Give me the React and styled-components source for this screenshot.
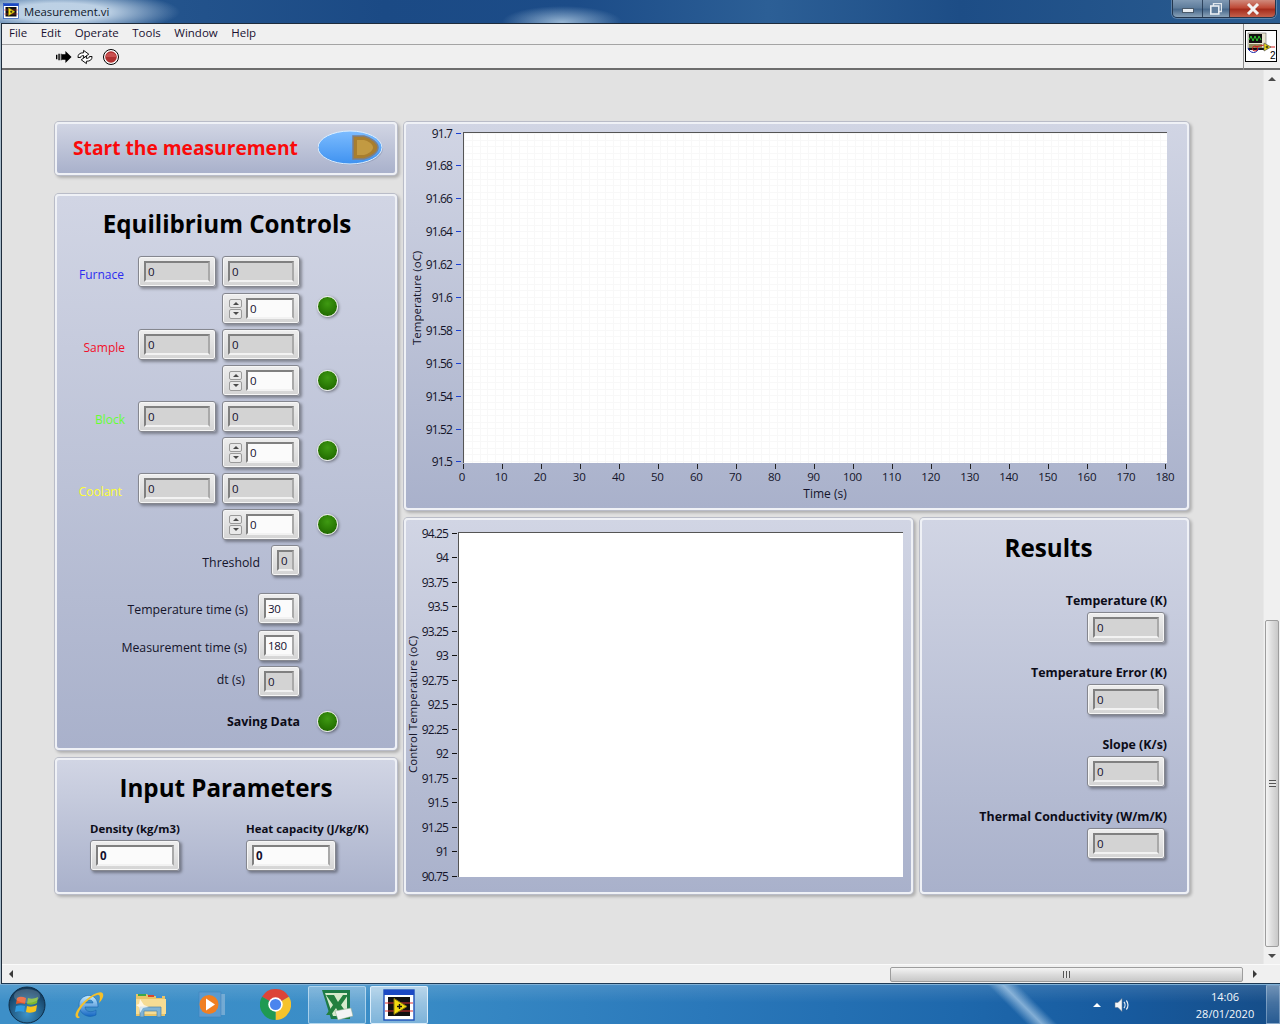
import styled, {createGlobalStyle} from 'styled-components';

const uiFont = `"Open Sans", "Noto Sans", "Liberation Sans", sans-serif`;

const GlobalStyle = createGlobalStyle`
  html, body {
    margin: 0;
    padding: 0;
    overflow: hidden;
    background: #a8bccb;
  }
  * { box-sizing: border-box; }
`;

const Screen = styled.div`
  width: 1280px;
  height: 1024px;
  display: flex;
  flex-direction: column;
  font-family: ${uiFont};
  font-size: 12px;
  color: #14142a;
  overflow: hidden;
  background: #a8bccb;
`;

/* ---------- window chrome ---------- */
const TitleBar = styled.div`
  height: 23px;
  flex: none;
  display: flex;
  align-items: flex-start;
  padding-left: 3px;
  background:
    radial-gradient(ellipse 60px 16px at 562px 22px, rgba(190, 215, 235, .75), transparent),
    radial-gradient(ellipse 120px 22px at 60px 12px, rgba(205, 222, 238, .9) 40%, transparent),
    linear-gradient(90deg, #2a5b92 0, #1b4a85 30%, #1c4c88 45%, #2c5f96 60%, #1d4d86 75%, #2a5c90 100%);
`;

const TitleIcon = styled.div`
  width: 16px;
  height: 16px;
  margin-top: 3px;
`;

const TitleText = styled.span`
  margin: 3px 0 0 5px;
  font-size: 11.3px;
  line-height: 17px;
  color: #10182a;
`;

const Caption = styled.div`
  margin-left: auto;
  margin-right: 4px;
  display: flex;
  height: 18px;
  border: 1px solid #23364e;
  border-top: none;
  border-radius: 0 0 5px 5px;
  overflow: hidden;
  box-shadow: 0 0 0 1px rgba(255, 255, 255, .25);
`;

const CaptionButton = styled.div`
  width: ${p => p.$w}px;
  display: flex;
  align-items: center;
  justify-content: center;
  border-left: ${p => p.$first ? 'none' : '1px solid rgba(30, 50, 75, .8)'};
  background: ${p => p.$close
    ? 'linear-gradient(#d08a7c, #bf4a37 45%, #a52c1c 55%, #c4614c)'
    : 'linear-gradient(#7f99b4, #5f7d9c 45%, #48698c 55%, #8aa2b8)'};
`;

const MinGlyph = styled.div`
  width: 12px;
  height: 5px;
  margin-top: 4px;
  background: #e8edf2;
  border: 1px solid #4a5a6a;
`;

const Window = styled.div`
  flex: 1;
  min-height: 0;
  margin: 0 0 0 1px;
  display: flex;
  flex-direction: column;
  border-top: 1px solid #1e2c3c;
  border-left: 1px solid #1e2c3c;
  border-bottom: 1px solid #1e3a55;
  background: #f0f0f0;
`;

const Header = styled.div`
  height: 46px;
  flex: none;
  display: flex;
  border-bottom: 2px solid #6d6d6d;
`;

const HeaderBars = styled.div`
  flex: 1;
  display: flex;
  flex-direction: column;
`;

const MenuBar = styled.div`
  height: 21px;
  display: flex;
  align-items: center;
  gap: 13.5px;
  padding: 0 0 4px 7px;
  border-bottom: 1px solid #a4a4a4;
`;

const MenuItem = styled.span`
  font-size: 11.5px;
  color: #1a1030;
`;

const ToolBar = styled.div`
  flex: 1;
  display: flex;
  align-items: center;
  padding: 0 0 0 54px;
  gap: 5px;
`;

const StopSlot = styled.div`
  margin-left: 5px;
  display: flex;
`;

const IconPane = styled.div`
  width: 37px;
  flex: none;
  border-left: 1px solid #8c8c8c;
  padding: 6px 0 0 1px;
  height: 46px;
`;

const Workspace = styled.div`
  flex: 1;
  min-height: 0;
  display: flex;
`;

const Canvas = styled.div`
  flex: 1;
  background: #e2e2e2;
  padding: 52px 0 0 53px;
  display: flex;
  gap: 7px;
`;

const VScroll = styled.div`
  width: 17px;
  flex: none;
  display: flex;
  flex-direction: column;
  align-items: center;
  background: #f0f0f0;
  border-left: 1px solid #e8e8e8;
`;

const ArrowBox = styled.div`
  height: 18px;
  width: 17px;
  flex: none;
  display: flex;
  align-items: center;
  justify-content: center;
`;

const Tri = styled.div`
  width: 0;
  height: 0;
  ${p => p.$dir === 'up' && 'border-left: 4px solid transparent; border-right: 4px solid transparent; border-bottom: 4px solid #4a4a4a;'}
  ${p => p.$dir === 'down' && 'border-left: 4px solid transparent; border-right: 4px solid transparent; border-top: 4px solid #4a4a4a;'}
  ${p => p.$dir === 'left' && 'border-top: 4px solid transparent; border-bottom: 4px solid transparent; border-right: 4px solid #3a3a3a;'}
  ${p => p.$dir === 'right' && 'border-top: 4px solid transparent; border-bottom: 4px solid transparent; border-left: 4px solid #3a3a3a;'}
`;

const VTrack = styled.div`
  flex: 1;
  width: 100%;
  padding: 532px 1px 0 1px;
  display: flex;
`;

const VThumb = styled.div`
  flex: 1;
  height: 327px;
  border: 1px solid #9d9d9d;
  border-radius: 2px;
  background: linear-gradient(90deg, #f4f4f4, #dcdcdc 50%, #c8c8c8);
  display: flex;
  align-items: center;
  justify-content: center;
`;

const VGrip = styled.div`
  width: 7px;
  height: 7px;
  background: repeating-linear-gradient(180deg, #555 0 1px, #e4e4e4 1px 3px);
`;

const HScroll = styled.div`
  height: 19px;
  flex: none;
  display: flex;
  align-items: center;
  border-top: 1px solid #fafafa;
  background: #f0f0f0;
`;

const HTrack = styled.div`
  flex: 1;
  padding-left: 871px;
  padding-right: 3px;
`;

const HThumb = styled.div`
  height: 15px;
  border: 1px solid #9d9d9d;
  border-radius: 2px;
  background: linear-gradient(#f4f4f4, #dcdcdc 50%, #c8c8c8);
  display: flex;
  align-items: center;
  justify-content: center;
`;

const HGrip = styled.div`
  width: 7px;
  height: 7px;
  background: repeating-linear-gradient(90deg, #555 0 1px, #e4e4e4 1px 3px);
`;

/* ---------- front panel ---------- */
const LeftColumn = styled.div`
  width: 342px;
  flex: none;
  display: flex;
  flex-direction: column;
`;

const RightColumn = styled.div`
  width: 785px;
  flex: none;
  display: flex;
  flex-direction: column;
  gap: 8px;
`;

const BottomRow = styled.div`
  display: flex;
  gap: 7px;
`;

const Panel = styled.section`
  width: ${p => p.$w ? `${p.$w}px` : '100%'};
  height: ${p => p.$h}px;
  margin-top: ${p => p.$top || 0}px;
  flex: none;
  border: 2px solid #eff1f6;
  border-radius: 4px;
  background: linear-gradient(#d1d5e4, #a9b1cb);
  box-shadow: 0 0 0 1px #b9bcc8, 2px 2px 3px 1px rgba(0, 0, 0, .22);
`;

const StartPanel = styled(Panel)`
  display: flex;
  align-items: center;
  padding: 0 11px 2px 16px;
  justify-content: space-between;

  svg {
    flex: none;
  }
`;

const StartText = styled.span`
  font-size: 19.2px;
  font-weight: 700;
  white-space: nowrap;
  color: #fa0a0a;
`;

const BigTitle = styled.h2`
  margin: 0;
  padding: 12px ${p => p.$right || 0}px 0 ${p => p.$left || 0}px;
  font-size: 24.2px;
  line-height: 32px;
  font-weight: 700;
  text-align: center;
  color: #000;
`;

const Rows = styled.div`
  display: flex;
  flex-direction: column;
  padding-top: 16px;
`;

const Row = styled.div`
  display: flex;
  justify-content: flex-end;
  align-items: center;
  margin-top: ${p => p.$top || 0}px;
`;

const LedSlot = styled.div`
  width: 95px;
  flex: none;
  padding-left: 17px;
  display: flex;
  align-items: center;
`;

const Led = styled.div`
  width: 21px;
  height: 21px;
  margin-bottom: ${p => p.$lift || 0}px;
  border-radius: 50%;
  border: 1.5px solid #f3f5ee;
  background: radial-gradient(circle at 50% 35%, #3f9a12, #2a7a05 55%, #1c5c00);
  box-shadow: 1px 1px 3px rgba(0, 0, 0, .45);
`;

const ChannelLabel = styled.span`
  font-size: 12px;
  margin: 5px ${p => p.$gap}px 0 0;
  color: ${p => p.$color};
`;

const FieldLabel = styled.span`
  font-size: 12.3px;
  margin: ${p => p.$drop || 0}px ${p => p.$gap}px 0 0;
  color: #14142a;
`;

const BoldLabel = styled.span`
  font-size: ${p => p.$size || 12.4}px;
  font-weight: 700;
  white-space: nowrap;
  color: #0c0c18;
`;

const Frame = styled.div`
  width: ${p => p.$w}px;
  height: 31px;
  margin-left: ${p => p.$left || 0}px;
  flex: none;
  display: flex;
  align-items: center;
  gap: 4px;
  padding: 0 5px;
  border: 1px solid #85878f;
  border-radius: 3px;
  background: linear-gradient(#eeeeee, #d4d4d4);
  box-shadow: inset 0 0 0 1px #f6f6f6, 2px 2px 3px rgba(0, 0, 0, .35);
`;

const Well = styled.div`
  flex: 1;
  min-width: 0;
  height: 21px;
  padding-left: 2px;
  display: flex;
  align-items: center;
  font-size: 11.5px;
  letter-spacing: -.3px;
  font-weight: ${p => p.$bold ? 700 : 400};
  color: #14102e;
  background: ${p => p.$input ? '#fbfbfb' : '#d3d3d3'};
  border: 2px solid #808080;
  border-right-color: #a9a9a9;
  border-bottom-color: #f2f2f2;
`;

const Spin = styled.div`
  width: 13px;
  height: 20px;
  margin-left: 1px;
  flex: none;
  display: flex;
  flex-direction: column;
  gap: 1px;
`;

const SpinButton = styled.div`
  flex: 1;
  display: flex;
  align-items: center;
  justify-content: center;
  border: 1px solid #9a9a9a;
  border-radius: 2px;
  background: #e9e9e9;
`;

const SmallTri = styled(Tri)`
  border-width: 3px;
`;

const InputRow = styled.div`
  display: flex;
  padding: 17px 0 0 33px;
  gap: 66px;
`;

const InputGroup = styled.div`
  display: flex;
  flex-direction: column;
  gap: 4px;
`;

const ResultsList = styled.div`
  display: flex;
  flex-direction: column;
  align-items: flex-end;
  padding: 28px 20px 0 0;
  gap: 21px;
`;

const ResultItem = styled.div`
  display: flex;
  flex-direction: column;
  align-items: flex-end;
  gap: 3px;
`;

const ResultFrame = styled(Frame)`
  margin-right: 2px;
`;

/* ---------- charts ---------- */
const ChartGrid = styled.div`
  display: grid;
  grid-template-columns: ${p => p.$titleW}px ${p => p.$axisW}px ${p => p.$plotW}px;
  grid-template-rows: ${p => p.$plotH}px auto;
  padding-top: ${p => p.$top}px;
`;

const YTitle = styled.div`
  writing-mode: vertical-rl;
  transform: rotate(180deg);
  text-align: center;
  font-size: 11.5px;
  line-height: 14px;
  white-space: nowrap;
  display: flex;
  align-items: center;
  justify-content: center;
`;

const YAxis = styled.div`
  display: flex;
  flex-direction: column;
  justify-content: space-between;
  padding: ${p => p.$pad};
`;

const YTick = styled.div`
  height: 0;
  display: flex;
  align-items: center;
  justify-content: flex-end;
  font-size: 12px;
  letter-spacing: -.85px;
  white-space: nowrap;
`;

const YMark = styled.i`
  width: 5px;
  height: 1px;
  margin: 0 ${p => p.$end}px 0 4px;
  background: ${p => p.$color};
  flex: none;
`;

const Plot = styled.div`
  background-color: #fff;
  border-top: 1px solid #555;
  border-left: 1px solid #555;
  ${p => p.$grid && `
    background-image:
      repeating-linear-gradient(90deg, #f8f8f8 0 1px, transparent 1px 7.82px),
      repeating-linear-gradient(180deg, #f8f8f8 0 1px, transparent 1px 6.56px);
    background-position: 0 0;
  `}
`;

const XAxis = styled.div`
  grid-column: 3;
  display: flex;
  justify-content: space-between;
  padding-right: 1px;
`;

const XTick = styled.div`
  width: 0;
  display: flex;
  flex-direction: column;
  align-items: center;
  font-size: 11.5px;
  letter-spacing: -.3px;
  line-height: 16px;
`;

const XMark = styled.i`
  width: 1px;
  height: 5px;
  flex: none;
  margin-top: 1px;
  background: #222;
`;

const XLabel = styled.span`
  margin-right: 2px;
`;

const XTitle = styled.div`
  grid-column: 3;
  text-align: center;
  padding-left: 20px;
  font-size: 12px;
  line-height: 16px;
  margin-top: 1px;
`;

/* ---------- taskbar ---------- */
const Taskbar = styled.footer`
  height: 40px;
  flex: none;
  position: relative;
  display: flex;
  align-items: center;
  overflow: hidden;
  border-top: 1px solid #7fb0d6;
  background:
    linear-gradient(rgba(255, 255, 255, .12), rgba(255, 255, 255, 0) 45%),
    linear-gradient(90deg, #3d8fc8 0, #3a8dc7 30%, #2a78ba 55%, #1e68ac 75%, #175a9e 88%, #164d88 100%);
`;

const Streak = styled.div`
  position: absolute;
  left: 1012px;
  top: -20px;
  width: 22px;
  height: 80px;
  transform: rotate(-45deg);
  background: linear-gradient(90deg, transparent, rgba(200, 225, 245, .6), transparent);
`;

const TaskSlot = styled.div`
  width: ${p => p.$w || 62}px;
  height: 38px;
  flex: none;
  display: flex;
  align-items: center;
  justify-content: center;
  padding-right: ${p => p.$right || 0}px;
  position: relative;
  z-index: 1;
`;

const TaskButton = styled.div`
  width: 58px;
  height: 38px;
  display: flex;
  align-items: center;
  justify-content: center;
  border: 1px solid rgba(230, 245, 255, ${p => p.$active ? .85 : .55});
  border-radius: 2px;
  background: linear-gradient(rgba(255, 255, 255, ${p => p.$active ? .6 : .3}), rgba(255, 255, 255, ${p => p.$active ? .35 : .12}));
`;

const Tray = styled.div`
  margin-left: auto;
  display: flex;
  align-items: center;
  height: 38px;
  position: relative;
  z-index: 1;
`;

const TrayArrow = styled(Tri)`
  margin-right: 13px;
  border-left-color: transparent;
  border-bottom-color: #fff;
`;

const Clock = styled.div`
  width: 100px;
  margin-left: 34px;
  display: flex;
  flex-direction: column;
  align-items: center;
  padding-left: 22px;
  font-size: 11px;
  line-height: 17px;
  color: #f4f8fc;
`;

const ShowDesktop = styled.div`
  width: 14px;
  height: 39px;
  margin-left: 2px;
  border: 1px solid rgba(200, 220, 240, .4);
  background: linear-gradient(rgba(255, 255, 255, .3), rgba(255, 255, 255, .08));
`;

/* ---------- drawings ---------- */
const LvIcon = ({size}) => (
    <svg width={size} height={size} viewBox="0 0 32 32">
        <rect x="1" y="1" width="30" height="30" fill="#fff" stroke="#1c4fb8" strokeWidth="1.4"/>
        <rect x="1" y="1" width="30" height="5" fill="#1b49c4"/>
        <rect x="5" y="8" width="22" height="19" fill="#111"/>
        <path d="M2 14h28M2 22h28" stroke="#d33" strokeWidth="1"/>
        <path d="M11 9.5 L24 17.5 L11 25.5 Z" fill="#f4dc10" stroke="#8a7a10" strokeWidth="1"/>
        <path d="M14 17.5h5M16.5 15v5" stroke="#111" strokeWidth="1.4"/>
    </svg>
);

const RunIcon = () => (
    <svg width="16" height="14" viewBox="0 0 17 14">
        <path d="M6 4H10V0.5L16.5 7L10 13.5V10H6Z" fill="#000"/>
        <path d="M0 4.5H1.5V9.5H0ZM2.5 3.5H4V10.5H2.5ZM5 3.5H6V10.5H5Z" fill="#000"/>
    </svg>
);

const LoopIcon = () => (
    <svg width="16" height="16" viewBox="0 0 17 16" fill="#fff" stroke="#000" strokeWidth="1">
        <path d="M1 8.5 C1 5 3 3.5 7 3.5 V1 L12.5 5 L7 9 V6.5 C5 6.5 4 7 3.8 8.5 Z"/>
        <path d="M16 7.5 C16 11 14 12.5 10 12.5 V15 L4.5 11 L10 7 V9.5 C12 9.5 13 9 13.2 7.5 Z"/>
    </svg>
);

const StopIcon = () => (
    <svg width="16" height="16" viewBox="0 0 16 16">
        <circle cx="8" cy="8" r="7.5" fill="#fff" stroke="#000"/>
        <circle cx="8" cy="8" r="5.8" fill="#b03030"/>
        <path d="M2.4 8a5.8 5.8 0 0 1 11.2 0Z" fill="#c95050"/>
    </svg>
);

const RestoreGlyph = () => (
    <svg width="12" height="12" viewBox="0 0 12 12" fill="none">
        <rect x="3.5" y="0.5" width="8" height="8" stroke="#dfe6ec" strokeWidth="1.4"/>
        <rect x="0.8" y="3" width="8" height="8" fill="#5f7d9c" stroke="#e8edf2" strokeWidth="1.6"/>
    </svg>
);

const ViIcon = () => (
    <svg width="32" height="32" viewBox="0 0 32 32">
        <rect x="0.5" y="0.5" width="31" height="31" fill="#fff" stroke="#000"/>
        <rect x="3" y="3" width="18" height="15" fill="#e8e4d0" stroke="#555" strokeWidth=".5"/>
        <rect x="4" y="4" width="13" height="9" fill="#111"/>
        <path d="M4 10 L6 6 L8 11 L10 6 L12 11 L14 6 L16 10" fill="none" stroke="#2ecc2e" strokeWidth="1"/>
        <rect x="4" y="14" width="13" height="4" fill="#8e8a5a"/>
        <rect x="3" y="18" width="18" height="2" fill="#111"/>
        <path d="M3 18 C5 24 12 24 14 18" fill="none" stroke="#1a2ab0" strokeWidth="1"/>
        <circle cx="10" cy="18.5" r="2.5" fill="none" stroke="#d02020"/>
        <path d="M10 17 L19 15 M25 17 H30" stroke="#d02020" strokeWidth="1" fill="none"/>
        <path d="M19 13 L26 17 L19 21 Z" fill="#f4e010" stroke="#555" strokeWidth=".7"/>
        <path d="M20.5 17h3M22 15.5v3" stroke="#000" strokeWidth=".8"/>
        <text x="25" y="29" fontSize="10" fontFamily="Liberation Sans, sans-serif" fill="#000">2</text>
    </svg>
);

const RunButton = () => (
    <svg width="66" height="36" viewBox="0 0 66 36">
        <defs>
            <linearGradient id="runBlue" x1="0" y1="0" x2="0" y2="1">
                <stop offset="0" stopColor="#7cbcff"/>
                <stop offset="1" stopColor="#3f92f0"/>
            </linearGradient>
        </defs>
        <ellipse cx="33" cy="18.5" rx="32" ry="16.5" fill="#7f89a8" opacity=".5"/>
        <ellipse cx="32" cy="17.5" rx="32" ry="16.5" fill="url(#runBlue)" stroke="#dff0ff" strokeWidth="1"/>
        <path d="M35 6 H46 C54 8 60 13 60 17.5 C60 22 54 27 46 29 H35 Z" fill="#a87e2e" stroke="#7d7f86" strokeWidth="1.5"/>
        <path d="M39 10 H46 C50 11 55 14 55 17.5 C55 21 50 24 46 25 H39 Z" fill="#c29a42"/>
    </svg>
);

const WinOrb = () => (
    <svg width="38" height="38" viewBox="0 0 38 38">
        <defs>
            <radialGradient id="orb" cx="50%" cy="75%" r="70%">
                <stop offset="0" stopColor="#3d93c9"/>
                <stop offset="1" stopColor="#123a5c"/>
            </radialGradient>
        </defs>
        <circle cx="19" cy="19" r="18" fill="url(#orb)" stroke="#0e2c46"/>
        <path d="M9 12 C12 10 15 11 18 12 L17 18 C14 17 11 17 8 18 Z" fill="#e8572a"/>
        <path d="M20 12 C23 13 26 13 30 11 L29 17 C26 19 22 19 19 18 Z" fill="#7cb82f"/>
        <path d="M8 20 C11 19 14 19 17 20 L16 26 C13 25 10 25 7 26 Z" fill="#2f9ae0"/>
        <path d="M19 20 C22 21 25 21 29 19 L28 25 C25 27 21 27 18 26 Z" fill="#f7c31c"/>
        <ellipse cx="19" cy="10" rx="13" ry="7" fill="#fff" opacity=".18"/>
    </svg>
);

const IeIcon = () => (
    <svg width="32" height="32" viewBox="0 0 32 32">
        <defs>
            <linearGradient id="ieBlue" x1="0" y1="0" x2="0" y2="1">
                <stop offset="0" stopColor="#c4ecff"/>
                <stop offset="1" stopColor="#1668c4"/>
            </linearGradient>
        </defs>
        <path d="M6 16 C6 9 13 5 19 7 C24 9 25 14 25 18 H12 C12 23 19 24 23 21 V26 C15 30 6 25 6 16 Z M12 14 H20 C20 10 13 10 12 14 Z" fill="url(#ieBlue)" fillRule="evenodd" stroke="#0f5aa8" strokeWidth=".5"/>
        <path d="M3 28 C0 24 12 8 24 4 C29 2 31 4 30 8 C29 11 27 13 26 14 C27 10 28 5 24 6 C16 8 6 20 5 26 C5 27 6 28 7 28 C5 30 4 29 3 28 Z" fill="#f5c02a"/>
    </svg>
);

const FolderIcon = () => (
    <svg width="32" height="28" viewBox="0 0 32 28">
        <path d="M1 3 H12 L14 5 H30 V25 H1 Z" fill="#e8c468"/>
        <rect x="3" y="3" width="8" height="2" fill="#3ba84a"/>
        <rect x="13" y="4" width="6" height="2" fill="#d8452e"/>
        <rect x="21" y="5" width="6" height="2" fill="#3b8fd8"/>
        <path d="M1 8 H31 V23 H1 Z" fill="#f6dc94"/>
        <path d="M5 26 V16 H26 V26 H22 V20 H9 V26 Z" fill="#7fb3d6" stroke="#4d84ab" strokeWidth=".7"/>
        <path d="M5 8 L9 14 L14 16 L8 17 L5 22 L4 16 L1 14 L4 13 Z" fill="#fff" opacity=".75"/>
    </svg>
);

const MediaIcon = () => (
    <svg width="30" height="28" viewBox="0 0 30 28">
        <rect x="7" y="3" width="20" height="21" fill="#8cb6d8" opacity=".7"/>
        <rect x="1" y="1" width="22" height="25" fill="#5b9bd0" stroke="#3f7fb6" strokeWidth=".5"/>
        <circle cx="11" cy="13.5" r="9.5" fill="#f07f22"/>
        <path d="M8 7.5 L17 13.5 L8 19.5 Z" fill="#fff"/>
    </svg>
);

const ChromeIcon = () => (
    <svg width="31" height="31" viewBox="0 0 30 30">
        <path d="M15 15 L2 7.5 A15 15 0 0 1 28 7.5 Z" fill="#dc4437"/>
        <path d="M15 15 L28 7.5 A15 15 0 0 1 15 30 Z" fill="#f6c32c"/>
        <path d="M15 15 L15 30 A15 15 0 0 1 2 7.5 Z" fill="#1f9a52"/>
        <circle cx="15" cy="15" r="7" fill="#fff"/>
        <circle cx="15" cy="15" r="5.4" fill="#4a85ee"/>
    </svg>
);

const ExcelIcon = () => (
    <svg width="32" height="32" viewBox="0 0 32 32">
        <path d="M1 1 H29 V30 H10 Z" fill="#1d7b45"/>
        <path d="M4 4 H26 V27 H12 Z" fill="#d6eacb"/>
        <path d="M5 6 H13 L17 13 L22 6 H27 L20 16 L27 26 H19 L15 19 L10 26 H5 L12 16 Z" fill="#23803f"/>
        <path d="M14 22 L30 19 L32 27 L17 31 Z" fill="#f4f4f4" stroke="#8aa88a" strokeWidth=".5"/>
    </svg>
);

const SpeakerIcon = () => (
    <svg width="16" height="16" viewBox="0 0 16 16">
        <path d="M1 5.5 H4 L8 1.5 V14.5 L4 10.5 H1 Z" fill="#f4f6f8" stroke="#6a7a8a" strokeWidth=".5"/>
        <path d="M10 5 C11.3 6.6 11.3 9.4 10 11 M12.3 3.5 C14.5 6 14.5 10 12.3 12.5" fill="none" stroke="#e8eef4" strokeWidth="1.2"/>
    </svg>
);

/* ---------- data ---------- */
const channels = [
    {name: 'Furnace', color: '#2b2bf0', gap: 14, top: 0, spinTop: 6, lift: 5},
    {name: 'Sample', color: '#f2102a', gap: 13, top: 5, spinTop: 5, lift: 1},
    {name: 'Block', color: '#66ff33', gap: 13, top: 5, spinTop: 5, lift: 5},
    {name: 'Coolant', color: '#ffff33', gap: 16, top: 5, spinTop: 5, lift: 1},
];

const results = ['Temperature (K)', 'Temperature Error (K)', 'Slope (K/s)', 'Thermal Conductivity (W/m/K)'];

const chart1Y = ['91.7', '91.68', '91.66', '91.64', '91.62', '91.6', '91.58', '91.56', '91.54', '91.52', '91.5'];
const chart1X = Array.from({length: 19}, (_, i) => String(i * 10));
const chart2Y = ['94.25', '94', '93.75', '93.5', '93.25', '93', '92.75', '92.5', '92.25', '92', '91.75', '91.5', '91.25', '91', '90.75'];

const Indicator = ({w = 78, left}) => (
    <Frame $w={w} $left={left}><Well>0</Well></Frame>
);

const Spinner = () => (
    <Frame $w={78}>
        <Spin>
            <SpinButton><SmallTri $dir="up"/></SpinButton>
            <SpinButton><SmallTri $dir="down"/></SpinButton>
        </Spin>
        <Well $input>0</Well>
    </Frame>
);

const Channel = ({name, color, gap, top, spinTop, lift}) => (
    <>
        <Row $top={top}>
            <ChannelLabel $color={color} $gap={gap}>{name}</ChannelLabel>
            <Indicator/>
            <Indicator left={6}/>
            <LedSlot/>
        </Row>
        <Row $top={spinTop}>
            <Spinner/>
            <LedSlot><Led $lift={lift}/></LedSlot>
        </Row>
    </>
);

const Chart = ({title, yTicks, xTicks, xTitle, tickColor, tickEnd, titleW, axisW, plotW, plotH, top, yPad, grid}) => (
    <ChartGrid $titleW={titleW} $axisW={axisW} $plotW={plotW} $plotH={plotH} $top={top}>
        <YTitle>{title}</YTitle>
        <YAxis $pad={yPad}>
            {yTicks.map(t => (
                <YTick key={t}>{t}<YMark $color={tickColor} $end={tickEnd}/></YTick>
            ))}
        </YAxis>
        <Plot $grid={grid}/>
        {xTicks && (
            <XAxis>
                {xTicks.map(t => (
                    <XTick key={t}><XMark/><XLabel>{t}</XLabel></XTick>
                ))}
            </XAxis>
        )}
        {xTitle && <XTitle>{xTitle}</XTitle>}
    </ChartGrid>
);

const App = () => {
    return (
        <Screen>
            <GlobalStyle/>
            <TitleBar>
                <TitleIcon><LvIcon size={16}/></TitleIcon>
                <TitleText>Measurement.vi</TitleText>
                <Caption>
                    <CaptionButton $w={29} $first><MinGlyph/></CaptionButton>
                    <CaptionButton $w={27}><RestoreGlyph/></CaptionButton>
                    <CaptionButton $w={46} $close>
                        <svg width="14" height="12" viewBox="0 0 14 12">
                            <path d="M2 1 L12 11 M12 1 L2 11" stroke="#f2f2f2" strokeWidth="3"/>
                        </svg>
                    </CaptionButton>
                </Caption>
            </TitleBar>

            <Window>
                <Header>
                    <HeaderBars>
                        <MenuBar>
                            {['File', 'Edit', 'Operate', 'Tools', 'Window', 'Help'].map(m => (
                                <MenuItem key={m}>{m}</MenuItem>
                            ))}
                        </MenuBar>
                        <ToolBar>
                            <RunIcon/>
                            <LoopIcon/>
                            <StopSlot><StopIcon/></StopSlot>
                        </ToolBar>
                    </HeaderBars>
                    <IconPane><ViIcon/></IconPane>
                </Header>

                <Workspace>
                    <Canvas>
                        <LeftColumn>
                            <StartPanel $h={53}>
                                <StartText>Start the measurement</StartText>
                                <RunButton/>
                            </StartPanel>

                            <Panel $h={556} $top={19}>
                                <BigTitle $left={2}>Equilibrium Controls</BigTitle>
                                <Rows>
                                    {channels.map(c => <Channel key={c.name} {...c}/>)}
                                    <Row $top={5}>
                                        <FieldLabel $gap={11} $drop={4}>Threshold</FieldLabel>
                                        <Indicator w={29}/>
                                        <LedSlot/>
                                    </Row>
                                    <Row $top={17}>
                                        <FieldLabel $gap={10} $drop={2}>Temperature time (s)</FieldLabel>
                                        <Frame $w={42}><Well $input>30</Well></Frame>
                                        <LedSlot/>
                                    </Row>
                                    <Row $top={6}>
                                        <FieldLabel $gap={11} $drop={4}>Measurement time (s)</FieldLabel>
                                        <Frame $w={42}><Well $input>180</Well></Frame>
                                        <LedSlot/>
                                    </Row>
                                    <Row $top={5}>
                                        <FieldLabel $gap={13} $drop={-4}>dt (s)</FieldLabel>
                                        <Indicator w={42}/>
                                        <LedSlot/>
                                    </Row>
                                    <Row $top={14}>
                                        <BoldLabel>Saving Data</BoldLabel>
                                        <LedSlot><Led/></LedSlot>
                                    </Row>
                                </Rows>
                            </Panel>

                            <Panel $h={136} $top={8}>
                                <BigTitle>Input Parameters</BigTitle>
                                <InputRow>
                                    <InputGroup>
                                        <BoldLabel $size={11.4}>Density (kg/m3)</BoldLabel>
                                        <Frame $w={90}><Well $input $bold>0</Well></Frame>
                                    </InputGroup>
                                    <InputGroup>
                                        <BoldLabel $size={11.4}>Heat capacity (J/kg/K)</BoldLabel>
                                        <Frame $w={90}><Well $input $bold>0</Well></Frame>
                                    </InputGroup>
                                </InputRow>
                            </Panel>
                        </LeftColumn>

                        <RightColumn>
                            <Panel $h={388}>
                                <Chart title="Temperature (oC)" yTicks={chart1Y} xTicks={chart1X} xTitle="Time (s)"
                                       tickColor="#1a3fd0" tickEnd={2} titleW={22} axisW={35} plotW={704} plotH={331} top={8} yPad="1px 0 1px" grid/>
                            </Panel>
                            <BottomRow>
                                <Panel $w={509} $h={376}>
                                    <Chart title="Control Temperature (oC)" yTicks={chart2Y} tickColor="#111" tickEnd={1}
                                           titleW={13} axisW={39} plotW={445} plotH={345} top={12} yPad="1px 0 1px"/>
                                </Panel>
                                <Panel $w={269} $h={376}>
                                    <BigTitle $right={12}>Results</BigTitle>
                                    <ResultsList>
                                        {results.map(r => (
                                            <ResultItem key={r}>
                                                <BoldLabel>{r}</BoldLabel>
                                                <ResultFrame $w={78}><Well>0</Well></ResultFrame>
                                            </ResultItem>
                                        ))}
                                    </ResultsList>
                                </Panel>
                            </BottomRow>
                        </RightColumn>
                    </Canvas>

                    <VScroll>
                        <ArrowBox><Tri $dir="up"/></ArrowBox>
                        <VTrack>
                            <VThumb><VGrip/></VThumb>
                        </VTrack>
                        <ArrowBox><Tri $dir="down"/></ArrowBox>
                    </VScroll>
                </Workspace>

                <HScroll>
                    <ArrowBox><Tri $dir="left"/></ArrowBox>
                    <HTrack>
                        <HThumb><HGrip/></HThumb>
                    </HTrack>
                    <ArrowBox><Tri $dir="right"/></ArrowBox>
                    <ArrowBox/>
                </HScroll>
            </Window>

            <Taskbar>
                <Streak/>
                <TaskSlot $w={58} $right={4}><WinOrb/></TaskSlot>
                <TaskSlot><IeIcon/></TaskSlot>
                <TaskSlot><FolderIcon/></TaskSlot>
                <TaskSlot><MediaIcon/></TaskSlot>
                <TaskSlot><ChromeIcon/></TaskSlot>
                <TaskSlot><TaskButton><ExcelIcon/></TaskButton></TaskSlot>
                <TaskSlot><TaskButton $active><LvIcon size={32}/></TaskButton></TaskSlot>
                <Tray>
                    <TrayArrow $dir="up"/>
                    <SpeakerIcon/>
                    <Clock>
                        <span>14:06</span>
                        <span>28/01/2020</span>
                    </Clock>
                    <ShowDesktop/>
                </Tray>
            </Taskbar>
        </Screen>
    );
};

export default App;
